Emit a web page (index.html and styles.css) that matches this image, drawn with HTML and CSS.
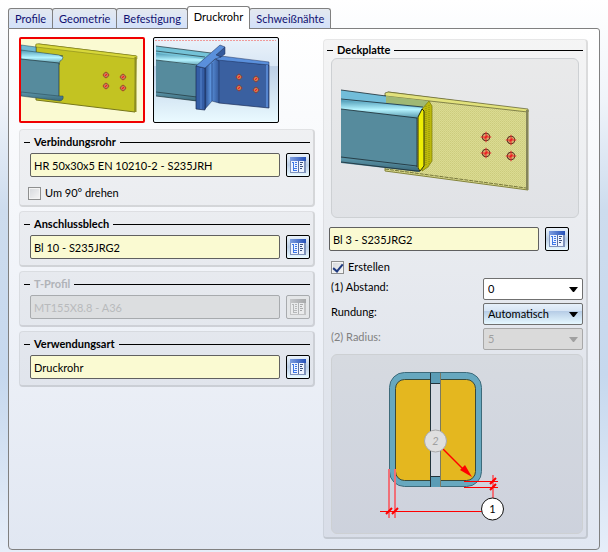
FILE: index.html
```html
<!DOCTYPE html>
<html lang="de">
<head>
<meta charset="UTF-8">
<meta name="viewport" content="width=device-width, initial-scale=1.0">
<title>Druckrohr</title>
<link rel="stylesheet" href="styles.css">
</head>
<body>

<!-- Shared symbols -->
<svg class="symbols" width="0" height="0" aria-hidden="true">
    <defs>
        <linearGradient id="bar" x1="0" y1="0" x2="1" y2="0">
            <stop offset="0" stop-color="#7f9fe0"/>
            <stop offset="1" stop-color="#2450b8"/>
        </linearGradient>
        <linearGradient id="tube" x1="0" y1="0" x2="0" y2="1">
            <stop offset="0" stop-color="#4e9ab5"/>
            <stop offset="0.5" stop-color="#b5f4ff"/>
            <stop offset="1" stop-color="#4a8a9f"/>
        </linearGradient>
        <linearGradient id="tubeLow" x1="0" y1="0" x2="0" y2="1">
            <stop offset="0" stop-color="#5c97ab"/>
            <stop offset="1" stop-color="#3a6778"/>
        </linearGradient>
        <linearGradient id="web" x1="0" y1="0" x2="1" y2="0">
            <stop offset="0" stop-color="#2c4f8f"/>
            <stop offset="0.4" stop-color="#5b93dd"/>
            <stop offset="1" stop-color="#34599b"/>
        </linearGradient>
        <pattern id="mesh" width="2" height="2" patternUnits="userSpaceOnUse">
            <rect width="2" height="2" fill="#dbdb93"/>
            <rect width="1" height="1" fill="#cccc7c"/>
            <rect x="1" y="1" width="1" height="1" fill="#d2d284"/>
        </pattern>
        <symbol id="catalog" viewBox="0 0 16 16">
            <g shape-rendering="crispEdges">
                <rect x="0" y="0" width="16" height="16" fill="#7f93bb"/>
                <rect x="1" y="4" width="13" height="11" fill="#eef4ff"/>
                <rect x="0" y="0" width="16" height="4" fill="url(#bar)"/>
                <path d="M8.500 4V15" stroke="#5a70a2"/>
                <path d="M3.500 5V14M2 5.500H4M5 5.500H7M5 7.500H7M5 9.500H7M4 11.500H7M4 13.500H7" fill="none" stroke="#3f78e6"/>
                <path d="M10 5.500H13M10 7.500H12M10 9.500H13M10 11.500H12" fill="none" stroke="#40557f"/>
            </g>
        </symbol>
        <symbol id="bolt" viewBox="0 0 8 8">
            <circle cx="4" cy="4" r="2.500" fill="#d9ac6c" stroke="#5a3424" stroke-width="0.700"/>
            <path d="M4 0.500V7.500M0.500 4H7.500" stroke="#ee1c24" stroke-width="0.600"/>
            <path d="M3 5L5 3" stroke="#ee1c24"/>
        </symbol>
    </defs>
</svg>

<div class="tabs" role="tablist">
    <button class="tab" role="tab">Profile</button>
    <button class="tab" role="tab">Geometrie</button>
    <button class="tab" role="tab">Befestigung</button>
    <button class="tab active" role="tab" aria-selected="true">Druckrohr</button>
    <button class="tab" role="tab">Schweißnähte</button>
</div>

<main class="panel">
    <div class="column">
        <div class="variants">
            <button class="variant selected" aria-label="Blech">
                <svg viewBox="0 0 122 82" width="122" height="82">
                    <path d="M15 5.500L18 5L115 17L114 73L15 61Z" fill="#c3c322" stroke="#77771a"/>
                    <path d="M15 5L18 5L116 17V20L15 8Z" fill="#d8d83a" stroke="#77771a" stroke-width="0.500"/>
                    <path d="M114.500 18V73" stroke="#8d8d20" stroke-width="2"/>
                    <path d="M0 6L15 8V14L42 17L0 12Z" fill="#6fb9d2" stroke="#24424c" stroke-width="0.500"/>
                    <path d="M0 11L38 16L42 18Q42 21 39 22L38 26L0 21Z" fill="url(#tube)" stroke="#24424c" stroke-width="0.500"/>
                    <path d="M0 20L38 24V58L0 54Z" fill="#568b9d"/>
                    <path d="M0 53L38 57L42 57Q43 61 39 62L0 57Z" fill="url(#tubeLow)" stroke="#24424c" stroke-width="0.500"/>
                    <path d="M0 20L38 24V57" fill="none" stroke="#1f333a" stroke-width="0.700"/>
                    <use href="#bolt" x="81" y="32" width="8" height="8"/>
                    <use href="#bolt" x="98" y="34" width="8" height="8"/>
                    <use href="#bolt" x="81" y="43" width="8" height="8"/>
                    <use href="#bolt" x="98" y="45" width="8" height="8"/>
                </svg>
            </button>
            <button class="variant" aria-label="T-Profil">
                <svg viewBox="0 0 122 82" width="122" height="82">
                    <path d="M0 1.500H121" stroke="#ef9a9a" stroke-dasharray="2 1"/>
                    <path d="M1 7L56 14L44 25L1 16Z" fill="#74c3d8"/>
                    <path d="M1 14L48 20L42 28L1 22Z" fill="url(#tube)"/>
                    <path d="M1 21L42 27V62L1 56Z" fill="#568b9d"/>
                    <path d="M1 53L42 58V62L1 57Z" fill="url(#tubeLow)"/>
                    <path d="M1 7L56 14M1 12L50 18M1 21L42 26M1 53L42 58M1 57L42 62" fill="none" stroke="#1f333a" stroke-width="0.700"/>
                    <!-- Plate -->
                    <path d="M62 20L114 26V69L64 64L62 62Z" fill="#3a60a0" stroke="#1c2f5a" stroke-width="0.700"/>
                    <path d="M60 19L66 17L114 23V26L62 21Z" fill="#5a90dc" stroke="#1c2f5a" stroke-width="0.500"/>
                    <path d="M112 26V68" stroke="#5686cf" stroke-width="2"/>
                    <!-- Flange -->
                    <path d="M61 16L70 8V15L66 18Z" fill="#34599b" stroke="#182a52" stroke-width="0.500"/>
                    <path d="M50 29L60 20L64 22V64L57 62L50 70Z" fill="url(#web)" stroke="#182a52" stroke-width="0.500"/>
                    <path d="M41 27L50 29V71L41 70Z" fill="#345da5" stroke="#182a52" stroke-width="0.700"/>
                    <path d="M46 29V70" stroke="#5686cf"/>
                    <path d="M41 27L65 6L70 8L61 16L66 18L60 20L50 29Z" fill="#5a90dc" stroke="#182a52" stroke-width="0.500"/>
                    <path d="M57 24V62" stroke="#24447f" stroke-width="0.700"/>
                    <use href="#bolt" x="80" y="34" width="8" height="8"/>
                    <use href="#bolt" x="97" y="36" width="8" height="8"/>
                    <use href="#bolt" x="80" y="45" width="8" height="8"/>
                    <use href="#bolt" x="97" y="47" width="8" height="8"/>
                </svg>
            </button>
        </div>

        <section class="group">
            <h2><label for="rohr">Verbindungsrohr</label></h2>
            <div class="picker">
                <input type="text" id="rohr" value="HR 50x30x5 EN 10210-2 - S235JRH">
                <button class="browse" aria-label="Auswahl"><svg width="16" height="16"><use href="#catalog"/></svg></button>
            </div>
            <label class="check"><input type="checkbox"> Um 90° drehen</label>
        </section>

        <section class="group">
            <h2><label for="blech">Anschlussblech</label></h2>
            <div class="picker">
                <input type="text" id="blech" value="Bl 10 - S235JRG2">
                <button class="browse" aria-label="Auswahl"><svg width="16" height="16"><use href="#catalog"/></svg></button>
            </div>
        </section>

        <section class="group disabled">
            <h2><label for="tprofil">T-Profil</label></h2>
            <div class="picker">
                <input type="text" id="tprofil" value="MT155X8.8 - A36" disabled>
                <button class="browse" aria-label="Auswahl" disabled><svg width="16" height="16"><use href="#catalog"/></svg></button>
            </div>
        </section>

        <section class="group">
            <h2><label for="art">Verwendungsart</label></h2>
            <div class="picker">
                <input type="text" id="art" value="Druckrohr">
                <button class="browse" aria-label="Auswahl"><svg width="16" height="16"><use href="#catalog"/></svg></button>
            </div>
        </section>
    </div>

    <section class="group cover">
        <h2><label for="deckplatte">Deckplatte</label></h2>
        <div class="preview">
            <svg viewBox="0 0 246 158" width="246" height="158">
                <path d="M53 36L56 33L196 51V131L53 112Z" fill="url(#mesh)" stroke="#84843a"/>
                <path d="M53 34L56 33L196 50V53L53 37Z" fill="#e2e27c" stroke="#5c5c30" stroke-width="0.700"/>
                <path d="M53 110L194 129" stroke="#77773c" stroke-dasharray="4 1"/>
                <path d="M195 51V131" stroke="#85855a" stroke-width="2"/>
                <path d="M54 37L96 42L94 48L54 46Z" fill="#9fb874"/>
                <path d="M9 31L54 37V44L92 48L86 58L9 50Z" fill="#72bdd9"/>
                <path d="M9 41L90 49L85 60L9 51Z" fill="url(#tube)"/>
                <path d="M9 50L85 59V111L9 101Z" fill="#568b9d"/>
                <path d="M9 99L85 108L88 113L9 104Z" fill="url(#tubeLow)"/>
                <path d="M9 31L54 37M9 40L91 48M9 50L85 59V108M9 98L85 107M9 103L84 112H88" fill="none" stroke="#1a2b32" stroke-width="0.800"/>
                <path d="M90 50L97 42L100 47V102L96 108L90 112Z" fill="#bcb90b" stroke="#77770a" stroke-width="0.700"/>
                <path d="M94 47V107M97 46V105" stroke="#8a880a" stroke-dasharray="1 1"/>
                <path d="M86 58L90 50L92 52V107L88 112L86 109Z" fill="#eeee05" stroke="#25290c"/>
                <use href="#bolt" x="148" y="72" width="12" height="12"/>
                <use href="#bolt" x="173" y="75" width="12" height="12"/>
                <use href="#bolt" x="148" y="88" width="12" height="12"/>
                <use href="#bolt" x="173" y="91" width="12" height="12"/>
            </svg>
        </div>
        <div class="picker">
            <input type="text" id="deckplatte" value="Bl 3 - S235JRG2">
            <button class="browse" aria-label="Auswahl"><svg width="16" height="16"><use href="#catalog"/></svg></button>
        </div>
        <label class="check"><input type="checkbox" checked> Erstellen</label>
        <div class="row">
            <label for="abstand">(1) Abstand:</label>
            <select id="abstand"><option>0</option></select>
        </div>
        <div class="row">
            <label for="rundung">Rundung:</label>
            <select id="rundung" class="auto"><option>Automatisch</option></select>
        </div>
        <div class="row disabled">
            <label for="radius">(2) Radius:</label>
            <select id="radius" disabled><option>5</option></select>
        </div>
        <div class="drawing">
            <svg viewBox="0 0 250 178" width="250" height="178">
                <!-- Tube section -->
                <rect x="57.500" y="17.500" width="92" height="114" rx="15" fill="#67a8bf" stroke="#3d6a7a"/>
                <rect x="63.500" y="24.500" width="80" height="101" rx="9" fill="#e4b71f" stroke="#3a4a3a"/>
                <rect x="98.500" y="18" width="10" height="113" fill="#d5dae2"/>
                <path d="M98 18H109V28H98ZM98 121H109V132H98Z" fill="#5b9db6"/>
                <path d="M98.500 18V132M98 28.500H109M98 121.500H109" stroke="#22343c"/>
                <path d="M108.500 18V132" stroke="#7b7a62"/>
                <!-- Dimensions -->
                <path d="M57 114V163M63 114V163M161 120V143" stroke="#f07078" stroke-width="2"/>
                <path d="M48 156H150V157H48ZM132 126H166V127H132ZM132 132H166V133H132Z" fill="#ff0000"/>
                <path d="M54 159L60 153M60 159L66 153M158 129L164 123M158 135L164 129" stroke="#ff0000" stroke-width="2"/>
                <path d="M111 94L134 117" stroke="#ff0000" stroke-width="1.500"/>
                <path d="M140 122L128 115L133 110Z" fill="#ff0000"/>
                <circle cx="103.500" cy="86" r="11" fill="#dfdfdf" stroke="#a8a8a8"/>
                <text x="103.500" y="90" class="mark muted">2</text>
                <circle cx="160.500" cy="154" r="11" fill="#ffffff" stroke="#111111"/>
                <text x="160.500" y="158" class="mark">1</text>
            </svg>
        </div>
    </section>
</main>

</body>
</html>
```
FILE: styles.css
```css
* {
    box-sizing: border-box;
}

html {
    min-height: 100%;
    background: linear-gradient(#ffffff, #f0f4fa 18%, #cddcee 38%, #c6d8ee 68%, #e6eef9);
}

body {
    margin: 0;
    padding: 6px 8px 2px;
    font-family: Lato, "Open Sans", sans-serif;
    font-size: 11px;
    line-height: 16px;
    color: #000;
}

button,
input,
select {
    margin: 0;
    font: inherit;
    color: inherit;
}

svg {
    display: block;
}

.symbols {
    position: absolute;
}

/* Tabs */
.tabs {
    display: flex;
    align-items: flex-end;
}

.tab {
    height: 20px;
    padding: 0 6px;
    border: 1px solid #808080;
    border-bottom: none;
    border-radius: 3px 3px 0 0;
    background: linear-gradient(#e4e9ef, #d3e1fa);
    color: #101070;
}

.tab + .tab {
    margin-left: -1px;
}

.tab.active {
    position: relative;
    height: 23px;
    margin-bottom: -1px;
    padding-bottom: 3px;
    background: #fff;
    color: #000;
}

/* Panel */
.panel {
    display: grid;
    grid-template-columns: minmax(0, 1fr) 265px;
    gap: 8px;
    padding: 8px 11px 10px 10px;
    border: 1px solid #808080;
    border-radius: 0 3px 4px 4px;
    background: linear-gradient(#ffffff, #e1e7f2);
}

.column {
    display: flex;
    flex-direction: column;
    gap: 4px;
}

.variants {
    display: flex;
    gap: 8px;
    margin-bottom: 2px;
}

.variant {
    padding: 1px;
    border: 1px solid #000;
    border-radius: 2px;
    background: linear-gradient(#eaf2fa, #d9e7f5 33%, #bccfe6 34%, #eafaff);
}

.variant.selected {
    padding: 0;
    border: 2px solid #f00000;
    background: #fafad2;
}

/* Groups */
.group {
    padding: 4px 3px 6px 4px;
    border: 1px solid rgba(0, 0, 0, 0.06);
    border-right: 2px solid rgba(0, 0, 0, 0.1);
    border-bottom: 2px solid rgba(0, 0, 0, 0.1);
    border-radius: 4px;
    background: rgba(0, 0, 0, 0.04);
}

.group h2 {
    display: flex;
    align-items: center;
    gap: 4px;
    margin: 0 0 3px;
    font-size: 11px;
    line-height: 16px;
}

.group h2::before,
.group h2::after {
    content: "";
    width: 6px;
    height: 1px;
    background: #000;
}

.group h2::after {
    flex: 1;
}

.disabled label {
    color: #808080;
}

.disabled h2 label {
    color: #b0b3b8;
}

.picker {
    display: flex;
    gap: 6px;
    padding-left: 6px;
}

.picker input {
    flex: 1;
    min-width: 0;
    height: 24px;
    padding: 0 3px;
    border: 1px solid #606060;
    border-radius: 2px;
    background: #fafad2;
}

.picker input:disabled {
    border-color: #a8abae;
    background: #dcdee0;
    color: #b8babc;
}

.browse {
    width: 24px;
    height: 24px;
    padding: 3px;
    border: 1px solid #000;
    border-radius: 2px;
    background: linear-gradient(#eaf2fa, #bccfe6 50%, #eafaff);
}

.browse:disabled {
    border-color: #a8abae;
    background: #e4e6e8;
}

.browse:disabled svg {
    filter: grayscale(1);
    opacity: 0.4;
}

.check {
    display: flex;
    align-items: center;
    gap: 4px;
    margin: 8px 0 0 4px;
}

.group > .check:last-child {
    margin-bottom: -2px;
}

.check input {
    display: grid;
    place-items: center;
    appearance: none;
    width: 13px;
    height: 13px;
    border: 1px solid #8e8f8f;
    background: linear-gradient(135deg, #d5d8dc, #f6f6f6);
    box-shadow: inset 0 0 0 1px #f4f4f4;
}

.check input:checked::before {
    content: "";
    width: 4px;
    height: 8px;
    margin-bottom: 2px;
    border: solid #1f3a80;
    border-width: 0 2px 2px 0;
    transform: rotate(40deg);
}

/* Cover plate */
.cover {
    margin-top: 2px;
    padding: 2px 3px 3px;
}

.cover h2 {
    margin: 0;
}

.preview,
.drawing {
    overflow: hidden;
    border: 1px solid #cdd0d3;
    border-radius: 6px;
    background: rgba(0, 0, 0, 0.04);
}

.preview {
    margin: 0 4px 9px;
}

.drawing {
    margin: 4px 0 0 4px;
    background: rgba(0, 0, 0, 0.05);
}

.cover .picker {
    padding: 0 14px 0 2px;
}

.row {
    display: flex;
    justify-content: space-between;
    margin: 3px 0 0 4px;
}

.row label {
    padding-top: 1px;
}

.row select {
    width: 100px;
    height: 22px;
    padding: 0 4px;
    appearance: none;
    border: 1px solid #707070;
    border-radius: 2px;
    background: #fff url("data:image/svg+xml,%3Csvg xmlns='http://www.w3.org/2000/svg' width='9' height='5'%3E%3Cpath d='M0 0H9L5 5H4Z'/%3E%3C/svg%3E") no-repeat right 4px center;
}

.row select.auto {
    background-image: url("data:image/svg+xml,%3Csvg xmlns='http://www.w3.org/2000/svg' width='9' height='5'%3E%3Cpath d='M0 0H9L5 5H4Z'/%3E%3C/svg%3E"), linear-gradient(#e6f0fa, #d6e4f4 35%, #b6cce6 36%, #e6f8ff);
    background-position: right 4px center, 0 0;
}

.row select:disabled {
    border-color: #a8a8a8;
    background-color: #dadada;
    background-image: url("data:image/svg+xml,%3Csvg xmlns='http://www.w3.org/2000/svg' width='9' height='5'%3E%3Cpath fill='%23a0a0a0' d='M0 0H9L5 5H4Z'/%3E%3C/svg%3E");
    color: #a0a0a0;
    opacity: 1;
}

.mark {
    font-size: 11px;
    text-anchor: middle;
}

.mark.muted {
    fill: #a0a0a0;
    font-style: italic;
}
```
